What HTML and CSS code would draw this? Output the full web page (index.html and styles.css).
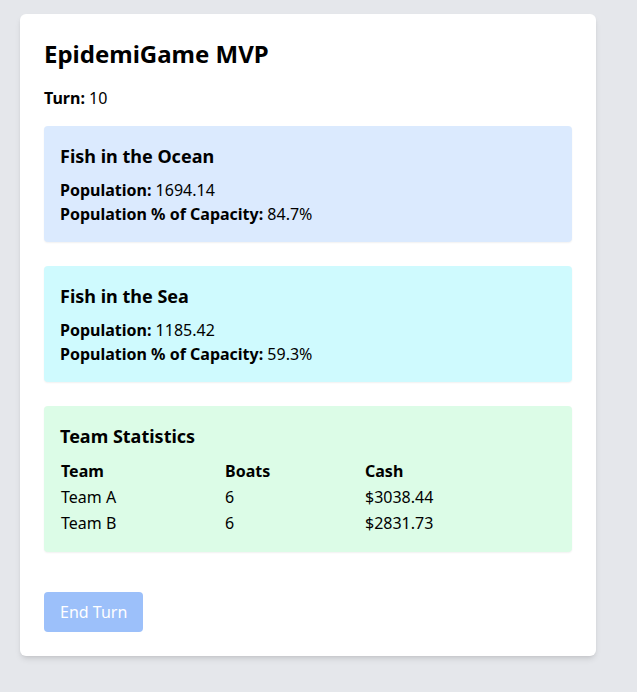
FILE: index.html
```html
<!DOCTYPE html>
<html lang="en">
<head>
<meta charset="utf-8">
<title>EpidemiGame MVP</title>
<link rel="stylesheet" href="styles.css">
</head>
<body>
<div class="page">
  <div class="card">
    <h1 class="title">EpidemiGame MVP</h1>
    <p class="turn"><strong>Turn:</strong> 10</p>

    <section class="panel panel-ocean">
      <h2 class="panel-title">Fish in the Ocean</h2>
      <p class="line"><strong>Population:</strong> 1694.14</p>
      <p class="line"><strong>Population % of Capacity:</strong> 84.7%</p>
    </section>

    <section class="panel panel-sea">
      <h2 class="panel-title">Fish in the Sea</h2>
      <p class="line"><strong>Population:</strong> 1185.42</p>
      <p class="line"><strong>Population % of Capacity:</strong> 59.3%</p>
    </section>

    <section class="panel panel-team">
      <h2 class="panel-title">Team Statistics</h2>
      <table class="stats">
        <thead>
          <tr><th class="c1">Team</th><th class="c2">Boats</th><th>Cash</th></tr>
        </thead>
        <tbody>
          <tr><td>Team A</td><td>6</td><td>$3038.44</td></tr>
          <tr><td>Team B</td><td>6</td><td>$2831.73</td></tr>
        </tbody>
      </table>
    </section>

    <button class="btn" disabled>End Turn</button>
  </div>
</div>
</body>
</html>
```

FILE: styles.css
```css
* { box-sizing: border-box; }
html, body { margin: 0; padding: 0; }
body {
  background: #e5e7eb;
  font-family: "Noto Sans", "Open Sans", sans-serif;
  color: #000;
  font-size: 16px;
  line-height: 24px;
  height: 692px;
}
.page {
  padding: 14px 20px;
}
.card {
  width: 576px;
  background: #fff;
  border-radius: 6px;
  padding: 24px;
  box-shadow: 0 4px 6px -1px rgba(0,0,0,0.1), 0 2px 4px -2px rgba(0,0,0,0.1);
}
.title {
  margin: 0 0 16px;
  font-size: 24px;
  line-height: 32px;
  font-weight: 700;
}
.turn { margin: 0 0 16px; }
strong { font-weight: 700; }
.panel {
  padding: 16px;
  border-radius: 4px;
  margin-bottom: 24px;
  box-shadow: 0 1px 2px rgba(0,0,0,0.06);
}
.panel-ocean { background: #dbeafe; }
.panel-sea { background: #cffafe; }
.panel-team { background: #dcfce7; margin-bottom: 40px; }
.panel-title {
  margin: 0 0 8px;
  font-size: 18px;
  line-height: 28px;
  font-weight: 700;
}
.line { margin: 0; }
.stats {
  width: 100%;
  border-collapse: collapse;
}
.stats th, .stats td {
  text-align: left;
  padding: 1px;
  height: 26px;
  line-height: 24px;
  vertical-align: middle;
}
.stats th { font-weight: 700; }
.stats .c1 { width: 164px; }
.stats .c2 { width: 140px; }
.btn {
  display: block;
  height: 40px;
  padding: 0 16px;
  border: 0;
  border-radius: 4px;
  background: #3b82f6;
  color: #fff;
  font-family: inherit;
  font-size: 16px;
  line-height: 24px;
  opacity: 0.5;
}
```
